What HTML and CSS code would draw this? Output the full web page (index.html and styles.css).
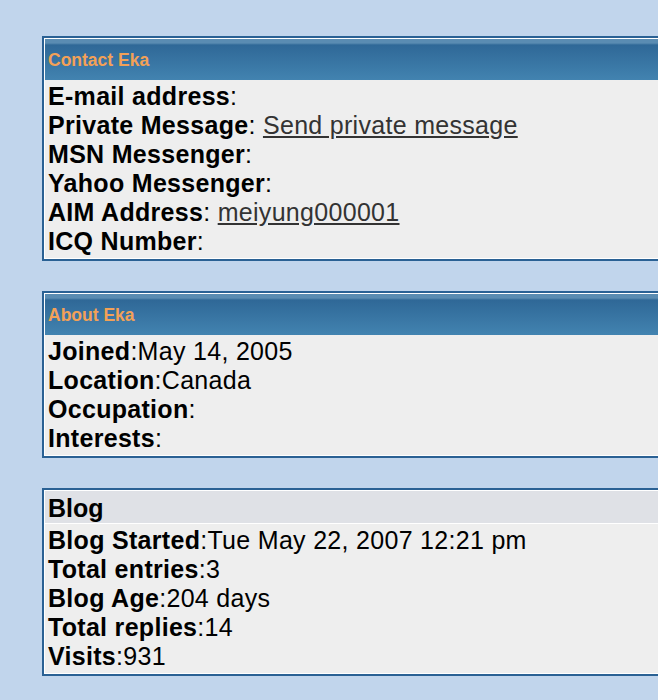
FILE: index.html
```html
<!DOCTYPE html>
<html lang="en">
<head>
    <meta charset="UTF-8">
    <title>Profile - Eka</title>
    <link rel="stylesheet" href="styles.css">
</head>
<body>
    <div class="page">
        <!-- Contact -->
        <div class="panel">
            <div class="panel-head">Contact Eka</div>
            <div class="panel-body">
                <div class="row"><b>E-mail address</b>:</div>
                <div class="row"><b>Private Message</b>: <a href="#">Send private message</a></div>
                <div class="row"><b>MSN Messenger</b>:</div>
                <div class="row"><b>Yahoo Messenger</b>:</div>
                <div class="row"><b>AIM Address</b>: <a href="#">meiyung000001</a></div>
                <div class="row"><b>ICQ Number</b>:</div>
            </div>
        </div>

        <!-- About -->
        <div class="panel">
            <div class="panel-head">About Eka</div>
            <div class="panel-body">
                <div class="row"><b>Joined</b>:May 14, 2005</div>
                <div class="row"><b>Location</b>:Canada</div>
                <div class="row"><b>Occupation</b>:</div>
                <div class="row"><b>Interests</b>:</div>
            </div>
        </div>

        <!-- Blog -->
        <div class="panel">
            <div class="panel-head plain">Blog</div>
            <div class="panel-body">
                <div class="row"><b>Blog Started</b>:Tue May 22, 2007 12:21 pm</div>
                <div class="row"><b>Total entries</b>:3</div>
                <div class="row"><b>Blog Age</b>:204 days</div>
                <div class="row"><b>Total replies</b>:14</div>
                <div class="row"><b>Visits</b>:931</div>
            </div>
        </div>
    </div>
</body>
</html>
```

FILE: styles.css
```css
html, body {
    overflow: hidden;
}
body {
    margin: 0;
    background-color: #c1d5ec;
    font-family: "Liberation Sans", Arial, sans-serif;
    color: #000;
}
.page {
    padding: 36px 0 0 42px;
}
.panel {
    width: 660px;
    border: 2px solid #2a6194;
    padding: 1px;
    background-color: #fff;
    margin-bottom: 30px;
}
.panel-head {
    height: 41px;
    line-height: 42px;
    padding-left: 3px;
    font-size: 17.5px;
    font-weight: bold;
    color: #f3a157;
    background: linear-gradient(#5a8cb2 0, #5a8cb2 4px, #2f6897 6px, #4283b0 100%);
}
.panel-head.plain {
    height: 32px;
    line-height: 34px;
    font-size: 25px;
    color: #000;
    background: #dfe1e6;
    border-bottom: 1px solid #fff;
}
.panel-body {
    background-color: #eeeeee;
    padding: 2px 3px;
}
.row {
    font-size: 25px;
    line-height: 29px;
    letter-spacing: 0.3px;
}
.row a {
    color: #333;
}
```
